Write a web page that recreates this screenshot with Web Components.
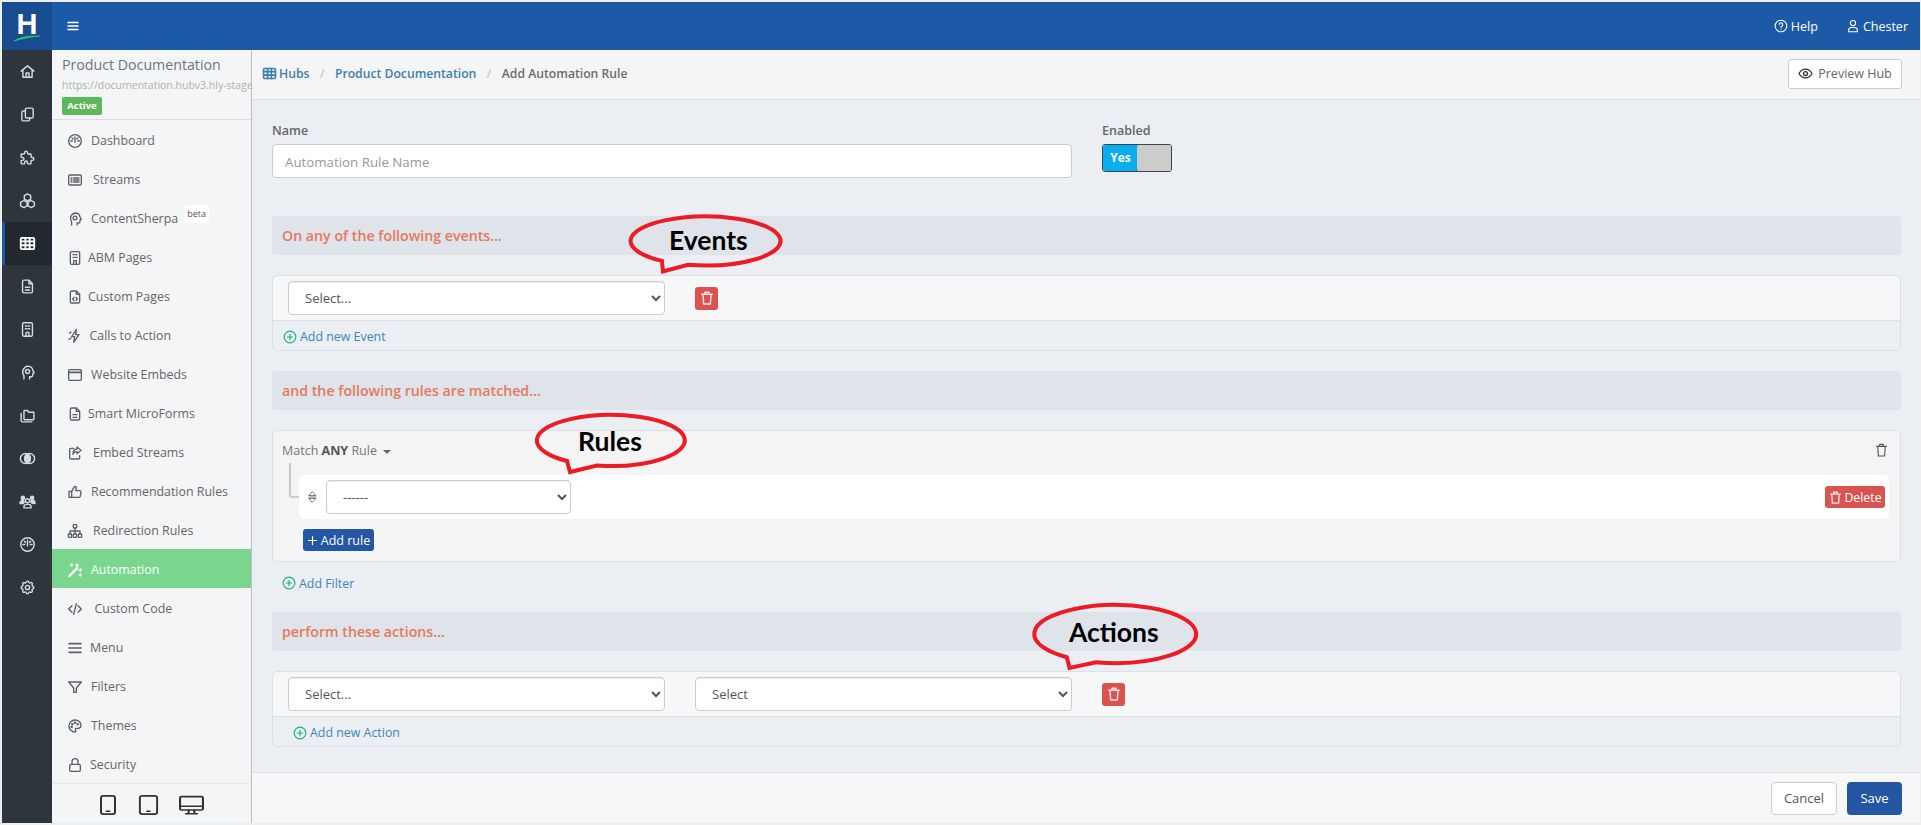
<!DOCTYPE html>
<html>
<head>
<meta charset="utf-8">
<title>Add Automation Rule</title>
<style>
  html, body { margin: 0; height: 100%; overflow: hidden; }
  body { background: #eeeeee; font-family: "Open Sans", "Noto Sans", sans-serif; font-size: 13px; color: #666; }
</style>
</head>
<body>
<hub-app>
  <hub-topbar slot="top"></hub-topbar>
  <hub-rail slot="rail"></hub-rail>
  <hub-sidebar slot="side" title="Product Documentation" url="https://documentation.hubv3.hly-stage">
    <nav-item icon="gauge" w="23">Dashboard</nav-item>
    <nav-item icon="streams" w="25">Streams</nav-item>
    <nav-item icon="brain" w="23" beta>ContentSherpa</nav-item>
    <nav-item icon="building" w="20">ABM Pages</nav-item>
    <nav-item icon="codefile" w="20">Custom Pages</nav-item>
    <nav-item icon="bolt" w="21.5">Calls to Action</nav-item>
    <nav-item icon="window" w="23">Website Embeds</nav-item>
    <nav-item icon="file" w="20">Smart MicroForms</nav-item>
    <nav-item icon="share" w="25">Embed Streams</nav-item>
    <nav-item icon="thumb" w="23">Recommendation Rules</nav-item>
    <nav-item icon="sitemap" w="25">Redirection Rules</nav-item>
    <nav-item icon="wand" w="23" active>Automation</nav-item>
    <nav-item icon="code" w="26.5">Custom Code</nav-item>
    <nav-item icon="menu" w="22">Menu</nav-item>
    <nav-item icon="filter" w="23">Filters</nav-item>
    <nav-item icon="palette" w="23">Themes</nav-item>
    <nav-item icon="lock" w="22">Security</nav-item>
  </hub-sidebar>
  <hub-breadcrumb slot="crumb"></hub-breadcrumb>
  <rule-form slot="main"></rule-form>
  <form-footer slot="foot"></form-footer>
  <speech-bubble slot="over" left="626" top="213" w="160" h="66" ell="79.5,28,75,24.5" from="125.5" to="103.5" tip="37,58.5" tx="43" ty="11">Events</speech-bubble>
  <speech-bubble slot="over" left="533" top="411" w="160" h="68" ell="78,29.5,74,25.5" from="126.5" to="101" tip="37,61" tx="45" ty="14">Rules</speech-bubble>
  <speech-bubble slot="over" left="1029" top="601" w="172" h="74" ell="86,33,81,29" from="126.4" to="103.6" tip="40.5,67" tx="40" ty="15">Actions</speech-bubble>
</hub-app>

<script>
const ICONS = {
  home: '<path d="M3 11.5 12 4l9 7.5M5.5 10v10h13V10M10 20v-6h4v6"/>',
  copy: '<rect x="9" y="3" width="11" height="14" rx="2"/><path d="M9 7H6a2 2 0 0 0-2 2v10a2 2 0 0 0 2 2h7a2 2 0 0 0 2-2v-2"/>',
  puzzle: '<path d="M4 7h3a1 1 0 0 0 1-1V5a2 2 0 0 1 4 0v1a1 1 0 0 0 1 1h3a1 1 0 0 1 1 1v3a1 1 0 0 0 1 1h1a2 2 0 0 1 0 4h-1a1 1 0 0 0-1 1v3a1 1 0 0 1-1 1h-3a1 1 0 0 1-1-1v-1a2 2 0 0 0-4 0v1a1 1 0 0 1-1 1H4a1 1 0 0 1-1-1v-3a1 1 0 0 1 1-1h1a2 2 0 0 0 0-4H4a1 1 0 0 1-1-1V8a1 1 0 0 1 1-1"/>',
  boxes: '<path d="M12 2.5l4.5 2.5v5L12 12.5 7.5 10V5zM6.8 12 11.3 14.5v5L6.8 22l-4.5-2.5v-5zM17.2 12l4.5 2.5v5L17.2 22l-4.5-2.5v-5z"/>',
  table: '<rect x="2.5" y="4" width="19" height="16" rx="1.5" fill="none"/><path d="M2.5 9h19M2.5 14.500h19M9 4v16M15 4v16"/>',
  file: '<path d="M14 3H7a2 2 0 0 0-2 2v14a2 2 0 0 0 2 2h10a2 2 0 0 0 2-2V8zM14 3v5h5M9 13h6M9 17h6"/>',
  building: '<rect x="5" y="2.500" width="14" height="19" rx="2"/><path d="M9 7h2M13 7h2M9 11h2M13 11h2M10 21v-5h4v5"/>',
  brain: '<path d="M7 21v-4.500A8.500 8.500 0 0 1 12 3c4 0 7 2.500 7.500 6l2 3.500-2 .8V16a2 2 0 0 1-2 2H15v3"/><circle cx="12" cy="10.500" r="2.800"/>',
  folders: '<path d="M8 5h4l2 2.500h7V17a1 1 0 0 1-1 1H8a1 1 0 0 1-1-1V6a1 1 0 0 1 1-1zM3 9v10a2 2 0 0 0 2 2h13"/>',
  circles: '<circle cx="9" cy="12" r="7"/><circle cx="15" cy="12" r="7"/><path d="M12 5.700A7 7 0 0 1 12 18.300 7 7 0 0 1 12 5.700z" fill="currentColor"/>',
  users: '<circle cx="12" cy="11" r="2.800"/><path d="M7 21v-1.500a3.500 3.500 0 0 1 3.500-3.500h3a3.500 3.500 0 0 1 3.500 3.500V21z"/><circle cx="5.500" cy="7" r="2.300" fill="currentColor"/><circle cx="18.500" cy="7" r="2.300" fill="currentColor"/><path d="M1.500 15v-1.500A3 3 0 0 1 4.500 11h2l1 2-2 2zM22.500 15v-1.500a3 3 0 0 0-3-3h-2l-1 2 2 2z" fill="currentColor"/>',
  gauge: '<circle cx="12" cy="12" r="9.500"/><path d="M12 6v8M5.500 12h2.500M16 12h2.500M7.500 7.500l1.500 1.500M16.500 7.500 15 9"/>',
  gear: '<path d="M10.300 4.300c.4-1.800 2.900-1.800 3.400 0a1.700 1.700 0 0 0 2.500 1c1.600-.9 3.300.8 2.400 2.400a1.700 1.700 0 0 0 1 2.600c1.800.4 1.800 2.900 0 3.400a1.700 1.700 0 0 0-1 2.500c.9 1.600-.8 3.300-2.400 2.400a1.700 1.700 0 0 0-2.500 1c-.5 1.800-3 1.800-3.400 0a1.700 1.700 0 0 0-2.600-1c-1.500.9-3.300-.8-2.300-2.400a1.700 1.700 0 0 0-1.100-2.500c-1.700-.5-1.700-3 0-3.400a1.700 1.700 0 0 0 1.100-2.600c-1-1.500.8-3.300 2.300-2.300 1 .6 2.300 0 2.600-1.100z"/><circle cx="12" cy="12" r="3"/>',
  streams: '<rect x="2.500" y="4.500" width="19" height="15" rx="2"/><path d="M6 9h1.500M10 9h8M6 12h1.500M10 12h8M6 15h1.500M10 15h8"/>',
  codefile: '<path d="M14 3H7a2 2 0 0 0-2 2v14a2 2 0 0 0 2 2h10a2 2 0 0 0 2-2V8zM14 3v5h5M10.500 12.500 8.500 15l2 2.500M13.500 12.500l2 2.500-2 2.500"/>',
  bolt: '<path d="M14 2.500 7 13h4.500l-1.500 8.500L18 10h-5zM4 8l2-2M3 17l3-2"/>',
  window: '<rect x="2.500" y="4" width="19" height="16" rx="1.500"/><path d="M2.500 8h19" stroke-width="2.500"/>',
  share: '<path d="M10 5H6a2 2 0 0 0-2 2v12a2 2 0 0 0 2 2h11a2 2 0 0 0 2-2v-3M15 3l6 5-6 5v-3c-3 0-5 1-6 4 0-5 2-8 6-8z"/>',
  thumb: '<path d="M7 11h-4v9h4zM7 11l4-7c1.500-1 3.500 0 3 2l-1 4h6a2 2 0 0 1 2 2.300l-1 6a2 2 0 0 1-2 1.700H7"/>',
  sitemap: '<rect x="9.500" y="2.500" width="5" height="5" rx="1"/><rect x="2" y="16.500" width="5" height="5" rx="1"/><rect x="9.500" y="16.500" width="5" height="5" rx="1"/><rect x="17" y="16.500" width="5" height="5" rx="1"/><path d="M4.500 16.500V12h15v4.500M12 7.500v9"/>',
  wand: '<path d="M3.500 21 15 9.500" stroke-width="3.500"/><path d="M15 3v4M13 5h4M20 10v4M18 12h4M7 3v3M5.500 4.500h3M20 18v3M18.500 19.500h3"/>',
  code: '<path d="M7.500 7 2.500 12l5 5M16.500 7l5 5-5 5M14 4l-4 16"/>',
  menu: '<path d="M3 5.500h18M3 12h18M3 18.500h18" stroke-width="2.400"/>',
  filter: '<path d="M2.500 4.500h19l-7.500 9V20l-4 0v-6.500z"/>',
  palette: '<path d="M12 21a9 9 0 1 1 0-18c5 0 9 3.600 9 8a4.500 4.500 0 0 1-4.500 4.500h-2a2 2 0 0 0-1.500 3.300c.5.700.3 2.200-1 2.200z"/><circle cx="8" cy="9.500" r=".9"/><circle cx="12" cy="7" r=".9"/><circle cx="16" cy="9.500" r=".9"/><circle cx="7" cy="13.500" r=".9"/>',
  lock: '<rect x="4" y="11" width="16" height="10.500" rx="2"/><path d="M7.500 11V7a4.500 4.500 0 0 1 9 0v4"/>',
  trash: '<path d="M4 6.500h16M9 6.500V3.500h6v3M6 6.500l1 14.500h10l1-14.500"/>',
  help: '<circle cx="12" cy="12" r="10"/><path d="M9 9.500a3 3 0 1 1 4.500 2.600c-1 .6-1.500 1.200-1.500 2.400M12 17.500v.5"/>',
  user: '<circle cx="12" cy="7" r="4.500"/><path d="M4.500 22v-2.500a5 5 0 0 1 5-5h5a5 5 0 0 1 5 5V22z"/>',
  eye: '<path d="M1.500 12S5.500 5 12 5s10.500 7 10.500 7-4 7-10.500 7S1.500 12 1.500 12z"/><circle cx="12" cy="12" r="3.200"/>',
  plusc: '<circle cx="12" cy="12" r="10"/><path d="M12 7.500v9M7.500 12h9"/>',
  plus: '<path d="M12 3v18M3 12h18" stroke-width="2.600"/>',
  sort: '<path d="M12 2l9 7H3zM12 22l9-7H3zM3 12h18"/>',
  phone: '<rect x="5" y="1" width="14" height="22" rx="2.500"/><path d="M10.500 19.500h3"/>',
  tablet: '<rect x="3" y="1" width="18" height="22" rx="2.500"/><path d="M10.500 19.500h3"/>',
  desktop: '<rect x="1" y="2" width="22" height="16" rx="1.500"/><path d="M1 13.500h22M9.500 18l-.5 4M14.500 18l.5 4M6.500 22.500h11"/>',
  hamburger: '<path d="M2 5h20M2 12h20M2 19h20" stroke-width="3"/>'
};

class HubIcon extends HTMLElement {
  constructor() {
    super();
    this.shadowDOM = this.attachShadow({mode: 'open'});
  }

  connectedCallback() {
    const size = this.getAttribute('size') || 16;
    const high = this.getAttribute('high') || size;
    const weight = this.getAttribute('weight') || 1.8;
    this.shadowDOM.innerHTML = `
      <style>
        :host { display: inline-flex; flex: none; line-height: 0; }
      </style>
      <svg width="${size}" height="${high}" viewBox="0 0 24 24" fill="none" stroke="currentColor"
        stroke-width="${weight}" stroke-linecap="round" stroke-linejoin="round" preserveAspectRatio="none">
        ${ICONS[this.getAttribute('name')]}
      </svg>`;
  }
}
customElements.define('hub-icon', HubIcon);

class HubApp extends HTMLElement {
  constructor() {
    super();
    this.shadowDOM = this.attachShadow({mode: 'open'});
  }

  connectedCallback() {
    this.shadowDOM.innerHTML = `
      <style>
        :host { display: block; position: relative; height: 825px; box-sizing: border-box; padding: 2px 1px 2px 2px; }
        .frame { display: grid; height: 821px; grid-template-columns: 50px 200px 1fr; grid-template-rows: 48px 50px 1fr 51px; }
        ::slotted([slot=top]) { grid-column: 1 / 4; grid-row: 1; }
        ::slotted([slot=rail]) { grid-column: 1; grid-row: 2 / 5; }
        ::slotted([slot=side]) { grid-column: 2; grid-row: 2 / 5; min-width: 0; }
        ::slotted([slot=crumb]) { grid-column: 3; grid-row: 2; }
        ::slotted([slot=main]) { grid-column: 3; grid-row: 3; }
        ::slotted([slot=foot]) { grid-column: 3; grid-row: 4; }
      </style>
      <div class="frame">
        <slot name="top"></slot>
        <slot name="rail"></slot>
        <slot name="side"></slot>
        <slot name="crumb"></slot>
        <slot name="main"></slot>
        <slot name="foot"></slot>
      </div>
      <slot name="over"></slot>`;
  }
}
customElements.define('hub-app', HubApp);

class HubTopbar extends HTMLElement {
  constructor() {
    super();
    this.shadowDOM = this.attachShadow({mode: 'open'});
  }

  connectedCallback() {
    this.shadowDOM.innerHTML = `
      <style>
        :host { display: flex; align-items: center; background: #1c5aa8; color: #fff; }
        .logo { width: 50px; height: 48px; background: #174c90; display: flex; flex-direction: column; align-items: center; flex: none; }
        .h { font: 700 29px/1 "Liberation Sans", sans-serif; margin-top: 8px; height: 25px; }
        .logo svg { margin-top: -1px; }
        .burger { margin-left: 15px; display: inline-flex; }
        .right { margin-left: auto; display: flex; align-items: center; gap: 28px; padding-right: 12px; font-size: 12.500px; }
        .right span { display: inline-flex; align-items: center; gap: 3px; }
      </style>
      <div class="logo">
        <div class="h">H</div>
        <svg width="28" height="8" viewBox="0 0 28 8"><path d="M1 7C7 3 15 1.500 27 2 18 3 9 4.500 1 7z" fill="#35c46a" stroke="#35c46a" stroke-width=".6"/></svg>
      </div>
      <div class="burger"><hub-icon name="hamburger" size="12" high="12"></hub-icon></div>
      <div class="right">
        <span><hub-icon name="help" size="14" high="14"></hub-icon>Help</span>
        <span><hub-icon name="user" size="14" high="14"></hub-icon>Chester</span>
      </div>`;
  }
}
customElements.define('hub-topbar', HubTopbar);

class HubRail extends HTMLElement {
  constructor() {
    super();
    this.shadowDOM = this.attachShadow({mode: 'open'});
  }

  connectedCallback() {
    const names = ['home', 'copy', 'puzzle', 'boxes', 'table', 'file', 'building', 'brain', 'folders', 'circles', 'users', 'gauge', 'gear'];
    this.shadowDOM.innerHTML = `
      <style>
        :host { display: block; background: #2e353d; color: #d3dbe4; }
        a { display: flex; height: 43px; align-items: center; justify-content: center; box-sizing: border-box; }
        a.on { background: #22282f; border-left: 3px solid #1c5aa8; padding-right: 3px; color: #fff; }
      </style>
      ${names.map(n => `<a class="${n === 'table' ? 'on' : ''}"><hub-icon name="${n}" size="17" high="17" weight="${n === 'table' ? 2.6 : 2}"></hub-icon></a>`).join('')}`;
  }
}
customElements.define('hub-rail', HubRail);

class HubSidebar extends HTMLElement {
  constructor() {
    super();
    this.shadowDOM = this.attachShadow({mode: 'open'});
  }

  connectedCallback() {
    this.shadowDOM.innerHTML = `
      <style>
        :host { display: flex; flex-direction: column; background: #f4f5f7; box-shadow: inset -2px 0 1px -1px #b9bcc0; overflow: hidden; }
        header { height: 70px; box-sizing: border-box; padding: 5px 0 0 10px; border-bottom: 1px solid #dcdcdc; flex: none; margin-right: 1px; }
        h1 { margin: 0; font-size: 14.200px; font-weight: 400; line-height: 20px; color: #6c757d; white-space: nowrap; }
        .url { font-size: 10.500px; line-height: 16px; margin-top: 2px; color: #b0b0b0; white-space: nowrap; }
        .badge { display: block; width: 40px; text-align: center; background: #5cb85c; color: #fff; font-size: 9.500px; font-weight: 700; line-height: 18px; height: 18px; border-radius: 2px; margin-top: 4px; }
        nav { flex: 1; }
        .devices { height: 42px; box-sizing: border-box; flex: none; margin-right: 1px; border-top: 1px solid #e8e8e8; display: flex; align-items: center; padding-left: 44px; color: #333; }
        .devices :nth-child(1) { margin-right: 16.500px; }
        .devices :nth-child(2) { margin-right: 19.500px; }
      </style>
      <header>
        <h1>${this.getAttribute('title')}</h1>
        <div class="url">${this.getAttribute('url')}</div>
        <span class="badge">Active</span>
      </header>
      <nav><slot></slot></nav>
      <div class="devices">
        <hub-icon name="phone" size="24" high="20" weight="2"></hub-icon>
        <hub-icon name="tablet" size="23" high="20" weight="2"></hub-icon>
        <hub-icon name="desktop" size="25" high="20" weight="2"></hub-icon>
      </div>`;
  }
}
customElements.define('hub-sidebar', HubSidebar);

class NavItem extends HTMLElement {
  constructor() {
    super();
    this.shadowDOM = this.attachShadow({mode: 'open'});
  }

  connectedCallback() {
    const w = this.getAttribute('w');
    const beta = this.hasAttribute('beta') ? '<sup>beta</sup>' : '';
    this.shadowDOM.innerHTML = `
      <style>
        :host { display: flex; align-items: center; height: 39px; box-sizing: border-box; padding: 2px 0 0 16px; margin-right: 1px; color: #666; font-size: 12.400px; white-space: nowrap; }
        :host([active]) { background: #7ad68e; color: #fff; }
        .ic { width: ${w}px; flex: none; display: flex; color: #5a5f66; margin-left: -1px; margin-right: 1px; }
        :host([active]) .ic { color: #fff; }
        sup { background: #fff; border-radius: 4px; font-size: 9px; line-height: 18px; padding: 0 3px; margin: -9px 0 0 6px; color: #555; }
      </style>
      <span class="ic"><hub-icon name="${this.getAttribute('icon')}" size="16" high="16" weight="2"></hub-icon></span>
      <slot></slot>${beta}`;
  }
}
customElements.define('nav-item', NavItem);

class HubBreadcrumb extends HTMLElement {
  constructor() {
    super();
    this.shadowDOM = this.attachShadow({mode: 'open'});
  }

  connectedCallback() {
    this.shadowDOM.innerHTML = `
      <style>
        :host { display: flex; align-items: center; box-sizing: border-box; background: #f5f5f5; border-bottom: 1px solid #dedede; padding: 0 18px 2px 10px; font-size: 12.200px; font-weight: 600; }
        a { color: #3b80b0; display: inline-flex; align-items: center; gap: 2px; }
        .tb { color: #3b80b0; display: inline-flex; }
        i { font-style: normal; font-weight: 400; color: #bbb; margin: 0 10.500px; }
        b { font-weight: 600; color: #6c6c6c; }
        .pv { margin-left: auto; display: inline-flex; align-items: center; gap: 5px; width: 114px; height: 30px; justify-content: center; box-sizing: border-box; background: #fff; border: 1px solid #ccc; border-radius: 3px; font-weight: 400; font-size: 12.500px; color: #666; }
        .pv hub-icon { color: #333; }
      </style>
      <a><span class="tb"><hub-icon name="table" size="15" high="15" weight="2.600"></hub-icon></span>Hubs</a>
      <i>/</i><a>Product Documentation</a><i>/</i><b>Add Automation Rule</b>
      <span class="pv"><hub-icon name="eye" size="15" high="15" weight="2"></hub-icon>Preview Hub</span>`;
  }
}
customElements.define('hub-breadcrumb', HubBreadcrumb);

class SectionTitle extends HTMLElement {
  constructor() {
    super();
    this.shadowDOM = this.attachShadow({mode: 'open'});
    this.shadowDOM.innerHTML = `
      <style>
        :host { display: flex; align-items: center; height: 39px; padding-left: 10px; background: #dfe3ea; border-radius: 4px; color: #e8785c; font-size: 14.200px; font-weight: 600; }
      </style>
      <slot></slot>`;
  }
}
customElements.define('section-title', SectionTitle);

class PickBox extends HTMLElement {
  constructor() {
    super();
    this.shadowDOM = this.attachShadow({mode: 'open'});
  }

  connectedCallback() {
    const w = this.getAttribute('w');
    this.shadowDOM.innerHTML = `
      <style>
        :host { display: block; flex: none; }
        select { display: block; width: ${w}px; height: 34px; box-sizing: border-box; background: #fff; border: 1px solid #ccc; border-radius: 4px; padding: 0 0 0 12px; font: 13px "Open Sans", sans-serif; color: #555; box-shadow: inset 0 1px 1px rgba(0,0,0,.075); }
      </style>
      <select><option>${this.getAttribute('label')}</option></select>`;
  }
}
customElements.define('pick-box', PickBox);

class TrashButton extends HTMLElement {
  constructor() {
    super();
    this.shadowDOM = this.attachShadow({mode: 'open'});
    this.shadowDOM.innerHTML = `
      <style>
        :host { display: inline-flex; width: 23px; height: 23px; background: #d9534f; border-radius: 3px; color: #fde; align-items: center; justify-content: center; flex: none; }
      </style>
      <hub-icon name="trash" size="16" high="16" weight="2.200"></hub-icon>`;
  }
}
customElements.define('trash-button', TrashButton);

class AddLink extends HTMLElement {
  constructor() {
    super();
    this.shadowDOM = this.attachShadow({mode: 'open'});
    this.shadowDOM.innerHTML = `
      <style>
        :host { display: inline-flex; align-items: center; gap: 3px; color: #3b87ba; font-size: 12.400px; }
        span { color: #19b27a; display: inline-flex; }
      </style>
      <span><hub-icon name="plusc" size="14" high="14" weight="2"></hub-icon></span><slot></slot>`;
  }
}
customElements.define('add-link', AddLink);

class PickCard extends HTMLElement {
  constructor() {
    super();
    this.shadowDOM = this.attachShadow({mode: 'open'});
  }

  connectedCallback() {
    const pad = this.getAttribute('pad') || 10;
    this.shadowDOM.innerHTML = `
      <style>
        :host { display: block; border: 1px solid #dcdfe4; border-radius: 5px; background: #ebeef3; }
        .row { display: flex; align-items: center; height: 44px; padding-left: 15px; background: #f6f7f9; border-bottom: 1px solid #dcdfe4; border-radius: 5px 5px 0 0; }
        .foot { display: flex; align-items: center; height: 29px; box-sizing: border-box; padding: 2px 0 0 ${pad}px; }
      </style>
      <div class="row"><slot></slot></div>
      <div class="foot"><slot name="foot"></slot></div>`;
  }
}
customElements.define('pick-card', PickCard);

class RulesCard extends HTMLElement {
  constructor() {
    super();
    this.shadowDOM = this.attachShadow({mode: 'open'});
  }

  connectedCallback() {
    this.shadowDOM.innerHTML = `
      <style>
        :host { display: block; position: relative; height: 132px; box-sizing: border-box; border: 1px solid #dcdfe4; border-radius: 5px; background: #f4f4f5; }
        .head { display: flex; align-items: center; justify-content: space-between; height: 38px; margin-bottom: 6px; padding: 0 11px 0 9px; font-size: 12.500px; color: #777; }
        .head b { color: #555; font-weight: 700; }
        .caret { display: inline-block; border: 4px solid transparent; border-top-color: #666; border-bottom: 0; margin: 0 0 1px 3px; }
        .tree { position: absolute; left: 16px; top: 32px; width: 10px; height: 35px; border-left: 2px solid #c9c9c9; border-bottom: 2px solid #c9c9c9; border-radius: 0 0 0 3px; box-sizing: border-box; }
        .rule { display: flex; align-items: center; height: 44px; margin: 0 11px 0 26px; padding: 0 4px 0 9px; background: #fff; border-radius: 5px; }
        .rule > hub-icon { color: #666; margin-right: 9px; }
        .del { margin-left: auto; display: inline-flex; align-items: center; justify-content: center; gap: 1px; width: 60px; height: 22px; background: #d9534f; color: #fff; border-radius: 3px; font-size: 12.300px; }
        .del hub-icon { color: #ffe3e3; }
        .add { display: inline-flex; align-items: center; gap: 3px; margin: 10px 0 0 30px; height: 22px; width: 71px; justify-content: center; background: #2456a4; color: #fff; border-radius: 3px; font-size: 12.500px; }
        .trash { color: #555; display: inline-flex; }
      </style>
      <div class="head">
        <span>Match <b>ANY</b> Rule <i class="caret"></i></span>
        <span class="trash"><hub-icon name="trash" size="15" high="16"></hub-icon></span>
      </div>
      <div class="tree"></div>
      <div class="rule">
        <hub-icon name="sort" size="9" high="12" weight="2"></hub-icon>
        <pick-box w="245" label="------"></pick-box>
        <span class="del"><hub-icon name="trash" size="15" high="15" weight="2.200"></hub-icon>Delete</span>
      </div>
      <span class="add"><hub-icon name="plus" size="11" high="11"></hub-icon>Add rule</span>`;
  }
}
customElements.define('rules-card', RulesCard);

class RuleForm extends HTMLElement {
  constructor() {
    super();
    this.shadowDOM = this.attachShadow({mode: 'open'});
  }

  connectedCallback() {
    this.shadowDOM.innerHTML = `
      <style>
        :host { display: block; background: #ebeef3; padding: 0 19px 0 20px; overflow: hidden; }
        .top { display: flex; gap: 30px; margin-top: 22px; }
        label { display: block; font-size: 12.500px; font-weight: 600; line-height: 18px; margin-bottom: 4px; color: #666; }
        input { display: block; width: 800px; height: 34px; box-sizing: border-box; border: 1px solid #ccc; border-radius: 4px; padding: 2px 12px 0; font: 13.300px "Open Sans", sans-serif; background: #fff; }
        input::placeholder { color: #999; opacity: 1; }
        .toggle { display: flex; width: 70px; height: 28px; box-sizing: border-box; border: 1px solid #3d4650; border-radius: 3px; overflow: hidden; }
        .toggle span { width: 35px; background: #0aaeef; color: #fff; font-size: 12px; font-weight: 700; text-align: center; line-height: 26px; }
        .toggle em { flex: 1; background: #ccc; border-radius: 3px 0 0 3px; margin-left: -1px; }
        section-title { margin-top: 38px; }
        section-title.next { margin-top: 20px; }
        pick-card, rules-card { margin-top: 20px; }
        trash-button { margin-left: 30px; }
        pick-box + pick-box { margin-left: 30px; }
        .filter { height: 50px; box-sizing: border-box; display: flex; align-items: center; padding: 0 0 8px 10px; }
      </style>
      <div class="top">
        <div><label>Name</label><input placeholder="Automation Rule Name"></div>
        <div><label>Enabled</label><div class="toggle"><span>Yes</span><em></em></div></div>
      </div>
      <section-title>On any of the following events...</section-title>
      <pick-card>
        <pick-box w="377" label="Select..."></pick-box>
        <trash-button></trash-button>
        <add-link slot="foot">Add new Event</add-link>
      </pick-card>
      <section-title class="next">and the following rules are matched...</section-title>
      <rules-card></rules-card>
      <div class="filter"><add-link>Add Filter</add-link></div>
      <section-title style="margin-top:0">perform these actions...</section-title>
      <pick-card pad="20">
        <pick-box w="377" label="Select..."></pick-box>
        <pick-box w="377" label="Select"></pick-box>
        <trash-button></trash-button>
        <add-link slot="foot">Add new Action</add-link>
      </pick-card>`;
  }
}
customElements.define('rule-form', RuleForm);

class FormFooter extends HTMLElement {
  constructor() {
    super();
    this.shadowDOM = this.attachShadow({mode: 'open'});
    this.shadowDOM.innerHTML = `
      <style>
        :host { display: flex; align-items: center; justify-content: flex-end; gap: 10px; background: #f7f7f7; border-top: 1px solid #dedede; padding-right: 18px; font-size: 13px; }
        span { display: flex; align-items: center; justify-content: center; height: 33px; box-sizing: border-box; border-radius: 4px; }
        .c { width: 66px; background: #fff; border: 1px solid #ccc; color: #555; }
        .s { width: 55px; background: #2456a4; color: #fff; }
      </style>
      <span class="c">Cancel</span><span class="s">Save</span>`;
  }
}
customElements.define('form-footer', FormFooter);

class SpeechBubble extends HTMLElement {
  constructor() {
    super();
    this.shadowDOM = this.attachShadow({mode: 'open'});
  }

  connectedCallback() {
    const a = n => this.getAttribute(n);
    const [cx, cy, rx, ry] = a('ell').split(',').map(Number);
    const at = deg => {
      const r = deg * Math.PI / 180;
      return `${(cx + rx * Math.cos(r)).toFixed(1)} ${(cy + ry * Math.sin(r)).toFixed(1)}`;
    };
    // long way round the ellipse, from one side of the tail to the other
    const d = `M${at(+a('from'))} A${rx} ${ry} 0 1 1 ${at(+a('to'))} L${a('tip').replace(',', ' ')} Z`;
    this.shadowDOM.innerHTML = `
      <style>
        :host { display: block; position: absolute; left: ${a('left')}px; top: ${a('top')}px; width: ${a('w')}px; height: ${a('h')}px; }
        svg { position: absolute; inset: 0; overflow: visible; }
        span { position: absolute; left: ${a('tx')}px; top: ${a('ty')}px; font: 700 26.500px/32px Lato, "Open Sans", sans-serif; color: #000; white-space: nowrap; }
      </style>
      <svg width="${a('w')}" height="${a('h')}" fill="none"><path d="${d}" stroke="#ed1c24" stroke-width="4" stroke-linejoin="miter"/></svg>
      <span><slot></slot></span>`;
  }
}
customElements.define('speech-bubble', SpeechBubble);
</script>
</body>
</html>
